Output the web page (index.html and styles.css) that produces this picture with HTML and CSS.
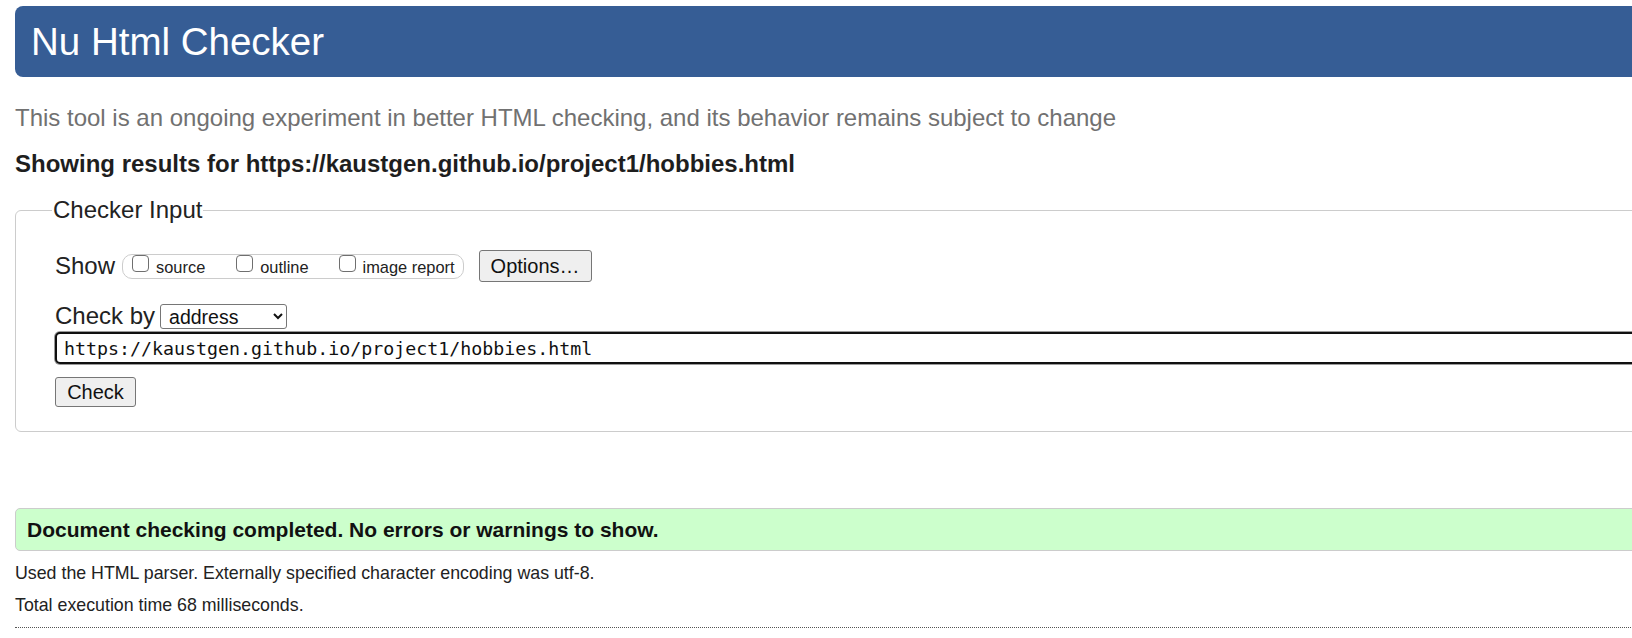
FILE: index.html
```html
<!DOCTYPE html>
<html lang="en">
<head>
<meta charset="utf-8">
<title>Nu Html Checker</title>
<link rel="stylesheet" href="styles.css">
</head>
<body>
<div class="page">
  <h1 class="banner">Nu Html Checker</h1>
  <p class="about">This tool is an ongoing experiment in better HTML checking, and its behavior remains subject to change</p>
  <p class="showing">Showing results for https://kaustgen.github.io/project1/hobbies.html</p>
  <fieldset class="input-box">
    <legend class="legend">Checker Input</legend>
    <div class="row show-row">
      <span class="row-label">Show</span>
      <span class="pill">
        <label class="opt opt-first"><input type="checkbox" class="cb"><span>source</span></label>
        <label class="opt opt-second"><input type="checkbox" class="cb"><span>outline</span></label>
        <label class="opt"><input type="checkbox" class="cb"><span>image report</span></label>
      </span>
      <button class="btn btn-options" type="button">Options…</button>
    </div>
    <div class="row by-row">
      <span class="row-label">Check by</span>
      <select class="sel"><option>address</option></select>
    </div>
    <input class="url" type="text" value="https://kaustgen.github.io/project1/hobbies.html">
    <div class="submit-row">
      <button class="btn btn-check" type="button">Check</button>
    </div>
  </fieldset>
  <div class="success">Document checking completed. No errors or warnings to show.</div>
  <p class="details details-first">Used the HTML parser. Externally specified character encoding was utf-8.</p>
  <p class="details">Total execution time 68 milliseconds.</p>
  <hr class="rule">
</div>
</body>
</html>
```

FILE: styles.css
```css
html, body {
  margin: 0;
  padding: 0;
  overflow: hidden;
  background: #ffffff;
}

.page {
  width: 1720px;
  padding: 6px 0 0 15px;
  font-family: "Liberation Sans", Arial, sans-serif;
  color: #222222;
}

.banner {
  margin: 0;
  height: 71px;
  line-height: 71px;
  padding-left: 16px;
  background: #365d95;
  color: #ffffff;
  font-size: 38.5px;
  font-weight: normal;
  border-radius: 8px;
}

.about {
  margin: 26px 0 0 0;
  line-height: 30px;
  font-size: 24px;
  color: #717171;
}

.showing {
  margin: 16px 0 0 0;
  line-height: 30px;
  font-size: 24px;
  font-weight: bold;
  color: #1e1e1e;
}

.input-box {
  margin: 17px 0 0 0;
  padding: 0 0 24px 39px;
  border: 1px solid #cccccc;
  border-radius: 6px;
  min-width: 0;
}

.legend {
  margin-left: -3px;
  padding: 0 1px;
  font-size: 24px;
  line-height: 28px;
  color: #222222;
}

.row {
  display: flex;
  align-items: center;
}

.show-row {
  margin-top: 26px;
  height: 32px;
}

.row-label {
  font-size: 24px;
  color: #222222;
  line-height: 28px;
}

.pill {
  display: flex;
  align-items: center;
  height: 23px;
  margin-left: 7px;
  padding: 0 8px 0 9px;
  border: 1px solid #cccccc;
  border-radius: 10px;
  font-size: 16.4px;
}

.opt {
  display: flex;
  align-items: center;
  color: #222222;
}

.opt span {
  margin-left: 7px;
  position: relative;
  top: 1px;
}

.opt-first {
  margin-right: 31px;
}

.opt-second {
  margin-right: 30px;
}

.cb {
  -webkit-appearance: none;
  appearance: none;
  box-sizing: border-box;
  width: 17px;
  height: 17px;
  margin: 0;
  border: 1.5px solid #6f6f6f;
  border-radius: 4px;
  background: #ffffff;
  position: relative;
  top: -3px;
}

.btn {
  font-family: "Liberation Sans", Arial, sans-serif;
  font-size: 20px;
  color: #111111;
  background: #efefef;
  border: 1px solid #767676;
  border-radius: 3px;
  padding: 0;
}

.btn-options {
  margin-left: 15px;
  width: 113px;
  height: 32px;
}

.by-row {
  margin-top: 21px;
  height: 26px;
}

.sel {
  margin-left: 5px;
  width: 127px;
  height: 25px;
  font-family: "Liberation Sans", Arial, sans-serif;
  font-size: 19.5px;
  color: #111111;
  border: 1px solid #767676;
  border-radius: 3px;
  background: #ffffff;
  padding: 0 0 0 4px;
}

.url {
  display: block;
  box-sizing: border-box;
  margin-top: 3px;
  width: 100%;
  height: 32px;
  padding: 0 7px;
  border: 2px solid #101010;
  border-radius: 5px;
  box-shadow: 0 0 0 1px #9a9a9a;
  font-family: "DejaVu Sans Mono", "Liberation Mono", monospace;
  font-size: 18.3px;
  color: #111111;
  outline: none;
}

.submit-row {
  margin-top: 13px;
}

.btn-check {
  width: 81px;
  height: 30px;
}

.success {
  margin-top: 76px;
  height: 41px;
  line-height: 41px;
  padding-left: 11px;
  background: #ccffcc;
  border: 1px solid #cccccc;
  border-radius: 5px;
  font-size: 21px;
  font-weight: bold;
  color: #111111;
}

.details {
  margin: 0;
  font-size: 17.8px;
  line-height: 24px;
  color: #222222;
}

.details-first {
  margin-top: 10px;
}

.details + .details {
  margin-top: 7.5px;
}

.rule {
  margin: 10px 0 0 0;
  border: 0;
  border-top: 1px dotted #555555;
  height: 0;
}
```
